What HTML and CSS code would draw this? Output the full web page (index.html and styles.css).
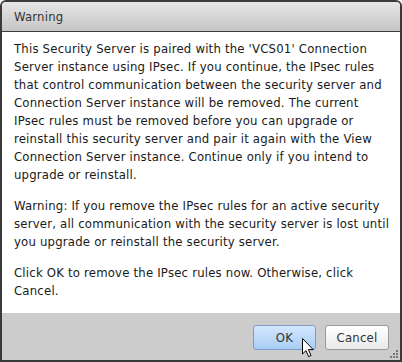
FILE: index.html
```html
<!DOCTYPE html>
<html>
<head>
<meta charset="utf-8">
<link rel="stylesheet" href="styles.css">
</head>
<body>
<div class="dialog">
  <div class="titlebar">Warning</div>
  <div class="content">
    <p>This Security Server is paired with the 'VCS01' Connection<br>Server instance using IPsec. If you continue, the IPsec rules<br>that control communication between the security server and<br>Connection Server instance will be removed. The current<br>IPsec rules must be removed before you can upgrade or<br>reinstall this security server and pair it again with the View<br>Connection Server instance. Continue only if you intend to<br>upgrade or reinstall.</p>
    <p>Warning: If you remove the IPsec rules for an active security<br>server, all communication with the security server is lost until<br>you upgrade or reinstall the security server.</p>
    <p>Click OK to remove the IPsec rules now. Otherwise, click<br>Cancel.</p>
  </div>
  <div class="footer">
    <button class="btn btn-ok">OK</button>
    <button class="btn btn-cancel">Cancel</button>
  </div>
  <svg class="cursor" width="14" height="22" viewBox="0 0 14 22">
    <path d="M1.5 1.5 L1.5 17 L5 13.6 L7.6 19.6 L10 18.6 L7.4 12.6 L12.2 12.6 Z" fill="#fff" stroke="#000" stroke-width="1" stroke-linejoin="round"/>
  </svg>
  <svg class="grip" width="10" height="10" viewBox="0 0 10 10">
    <rect x="7" y="1" width="2" height="2" fill="#777"/>
    <rect x="4" y="4" width="2" height="2" fill="#777"/>
    <rect x="7" y="4" width="2" height="2" fill="#777"/>
    <rect x="1" y="7" width="2" height="2" fill="#777"/>
    <rect x="4" y="7" width="2" height="2" fill="#777"/>
    <rect x="7" y="7" width="2" height="2" fill="#777"/>
  </svg>
</div>
</body>
</html>
```
FILE: styles.css
```css
html, body {
  margin: 0;
  padding: 0;
  background: #fff;
}
.dialog {
  box-sizing: border-box;
  width: 402px;
  height: 362px;
  border: 2px solid #3a3a3a;
  border-radius: 6px 6px 0 0;
  display: flex;
  flex-direction: column;
  overflow: hidden;
  position: relative;
  font-family: "DejaVu Sans Condensed", "DejaVu Sans", sans-serif;
  font-stretch: condensed;
  font-size: 13px;
  color: #1a1a1a;
}
.titlebar {
  height: 30px;
  flex: none;
  box-sizing: border-box;
  background: linear-gradient(#e6e6e6, #c5c5c5);
  border-bottom: 1px solid #3a3a3a;
  padding-left: 12px;
  display: flex;
  align-items: center;
  color: #333;
  letter-spacing: 0.2px;
}
.content {
  flex: 1;
  background: #fff;
  padding: 8px 4px 0 12px;
  line-height: 18px;
  letter-spacing: 0.2px;
  white-space: nowrap;
}
.content p {
  margin: 0 0 13px 0;
}
.footer {
  height: 48px;
  flex: none;
  box-sizing: border-box;
  background: #cccccc;
  display: flex;
  justify-content: flex-end;
  align-items: center;
  gap: 9px;
  padding: 0 11px 0 0;
}
.btn {
  box-sizing: border-box;
  height: 25px;
  border-radius: 3px;
  font-family: inherit;
  font-stretch: condensed;
  font-size: 13px;
  letter-spacing: 0.2px;
  color: #333;
  padding: 0;
  margin-top: 1px;
}
.btn-ok {
  width: 63px;
  border: 1px solid #7d9ec4;
  background: linear-gradient(#d3e7fd, #a9cdf5);
}
.btn-cancel {
  width: 64px;
  border: 1px solid #9a9a9a;
  background: linear-gradient(#ffffff, #e9e9e9);
}
.cursor {
  position: absolute;
  left: 299px;
  top: 335px;
}
.grip {
  position: absolute;
  right: 1px;
  bottom: 1px;
}
```
